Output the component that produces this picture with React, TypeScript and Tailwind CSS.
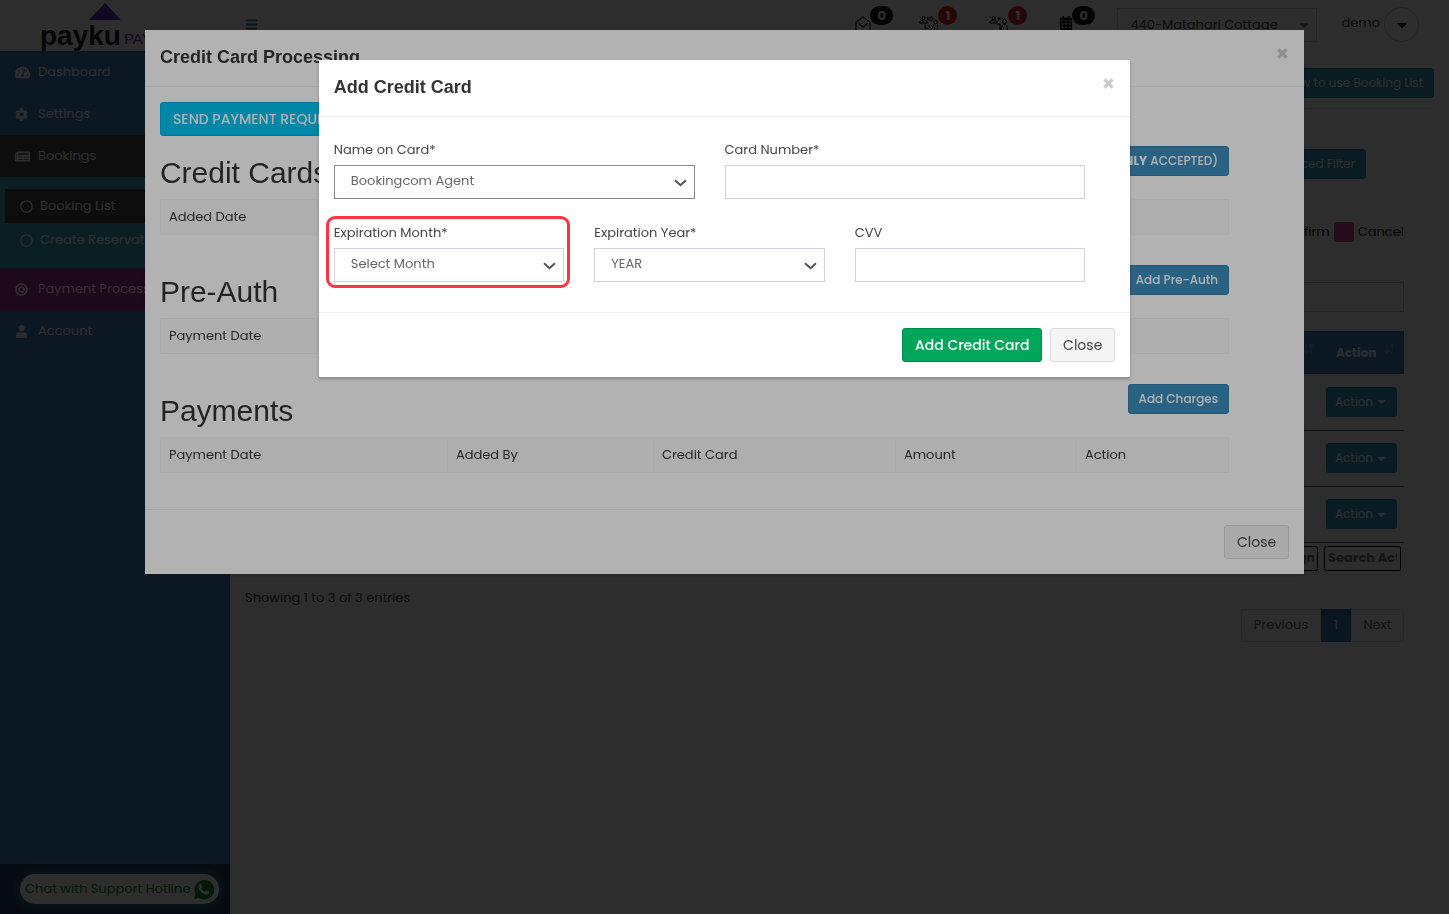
import { useState } from "react";
import type { ReactNode } from "react";
import {
  FaBars,
  FaBullseye,
  FaCalendarAlt,
  FaCaretDown,
  FaCog,
  FaNewspaper,
  FaRegCircle,
  FaTachometerAlt,
  FaUser,
} from "react-icons/fa";
import { ArrowDownUp } from "lucide-react";
import clsx from "clsx";

const MONTHS = ["January", "February", "March", "April", "May", "June", "July", "August", "September", "October", "November", "December"];
const YEARS = ["2024", "2025", "2026", "2027", "2028", "2029", "2030"];

function Logo() {
  return (
    <a href="#home" className="relative flex h-full w-[230px] shrink-0 items-end pl-10">
      <svg className="absolute left-[89px] top-[3px]" width="32" height="17" viewBox="0 0 32 17">
        <path d="M16 0L32 17H0z" fill="#6b2fc4" />
      </svg>
      <span className="font-['Liberation_Sans',sans-serif] text-[28px] leading-[31px] font-bold text-[#222]">payku</span>
      <span className="ml-[3px] font-['Liberation_Sans',sans-serif] text-[15px] leading-[24px] text-[#6b2fc4]">PAY</span>
    </a>
  );
}

function MailIcon() {
  return (
    <svg width="16" height="16" viewBox="0 0 16 16" fill="none" stroke="currentColor" strokeWidth="1.1">
      <path d="M1 6l7-5 7 5v9H1z" />
      <path d="M3.500 7.500L8 11l4.500-3.500" />
    </svg>
  );
}

function GuestIcon({ flip }: { flip?: boolean }) {
  return (
    <svg width="20" height="16" viewBox="0 0 20 16" fill="none" stroke="currentColor" strokeWidth="1">
      <circle cx="4.500" cy="2" r="1.500" />
      <path d="M.5 7c0-4 8-4 8 0z" />
      {flip ? (
        <>
          <path d="M14 2.500H9M10.500 1L9 2.500 10.500 4M8 8h3v7" />
          <circle cx="15.500" cy="5.500" r="2" />
          <path d="M12.500 13c0-6 6-6 6 0v2h-6z" />
        </>
      ) : (
        <>
          <path d="M8.500 1.800H12V.5l2.500 2.300L12 5V3.800H8.500zM6 8.500v4h4M9 9l2.500 3" />
          <circle cx="16.500" cy="6" r="1.800" />
          <path d="M18.500 8.500v6.500M15 8.500L11.500 14.500M15.500 15v-4" />
        </>
      )}
    </svg>
  );
}

type NavCountProps = { label: string; count: number; alert?: boolean; className?: string; children: ReactNode };

function NavCount({ label, count, alert, className, children }: NavCountProps) {
  return (
    <a href="#notifications" aria-label={label} className={clsx("flex items-start pt-[6px] text-black", className)}>
      <span className="mt-[10px]">{children}</span>
      <span
        className={clsx(
          "-ml-px flex h-[19px] items-center justify-center rounded-full px-[7px] text-[13px] font-bold text-white",
          alert ? "bg-[#dd2b20]" : "bg-[#161616]"
        )}
      >
        {count}
      </span>
    </a>
  );
}

function TopBar() {
  return (
    <header className="flex h-[51px] items-start bg-white">
      <Logo />
      <button type="button" aria-label="Toggle menu" className="mt-[18px] ml-[15px] text-[#2a7ab0]">
        <FaBars size={13} />
      </button>
      <nav className="ml-auto flex">
        <NavCount label="Messages" count={0} className="w-16"><MailIcon /></NavCount>
        <NavCount label="Check in" count={1} alert className="w-[70px]"><GuestIcon /></NavCount>
        <NavCount label="Check out" count={1} alert className="w-[70px]"><GuestIcon flip /></NavCount>
        <NavCount label="Calendar" count={0} className="w-[58px]"><FaCalendarAlt size={14} /></NavCount>
      </nav>
      <div className="relative mt-2">
        <select aria-label="Property" className="h-[34px] w-[200px] appearance-none border border-[#d2d6de] bg-white pl-3 text-[13px] text-[#444]">
          <option>440-Matahari Cottage</option>
        </select>
        <FaCaretDown size={14} className="absolute right-[6px] top-[10px] text-[#777]" />
      </div>
      <span className="mt-[13px] ml-6 text-[13px] leading-[20px] text-[#444]">demo</span>
      <button type="button" aria-label="User menu" className="mt-[7px] mr-[30px] ml-1 flex size-[35px] items-center justify-center rounded-full border border-[#ccc] text-black">
        <FaCaretDown size={16} />
      </button>
    </header>
  );
}

function NavLink({ icon, label, className }: { icon: ReactNode; label: string; className?: string }) {
  return (
    <a href="#nav" className={clsx("flex h-[42px] items-center pl-[15px] text-[13px] text-white", className)}>
      <span className="flex w-[23px] text-[13px]">{icon}</span>
      {label}
    </a>
  );
}

function Sidebar() {
  return (
    <aside className="flex w-[230px] shrink-0 flex-col bg-[#418bc8]">
      <NavLink icon={<FaTachometerAlt size={15} />} label="Dashboard" />
      <NavLink icon={<FaCog />} label="Settings" />
      <NavLink icon={<FaNewspaper size={15} />} label="Bookings" className="bg-[#4a4a4a]" />
      <div className="bg-[#3ba9c9] pt-3 pb-[11px] pl-[5px]">
        <a href="#bookings" className="flex h-[34px] items-center gap-[7px] bg-[#4a4a4a] pl-[15px] text-[13px] text-white">
          <FaRegCircle size={13} />Booking List
        </a>
        <a href="#create" className="flex h-[34px] items-center gap-[7px] pl-[15px] text-[13px] text-white">
          <FaRegCircle size={13} />Create Reservation
        </a>
      </div>
      <NavLink icon={<FaBullseye />} label="Payment Process" className="bg-[#a8309c]" />
      <NavLink icon={<FaUser size={13} />} label="Account" />
      <div className="mt-auto flex h-[50px] items-center bg-[#23395f] pl-5">
        <a href="#support" className="flex h-[30px] w-[199px] items-center justify-between rounded-full bg-white px-[5px] text-[13px] whitespace-nowrap text-[#128c2e] shadow-[0_0_14px_#3ba9c9]">
          Chat with Support Hotline
          <svg width="21" height="21" viewBox="0 0 21 21">
            <path d="M1 20l1.500-5.200A9.800 9.800 0 1 1 6.200 19z" fill="#128c2e" />
            <path d="M6.500 5.300c.7-.7 1.500-.6 1.900.2l.8 1.900c.2.500-.9 1.400-.9 1.700.8 1.700 2 2.900 3.700 3.600.3.100 1.200-1.300 1.700-1.100l1.900 1c.7.400.5 2-.7 2.700-3.600 2-10.800-4.500-9.300-8.700.2-.5.500-1 .9-1.300z" fill="#fff" />
          </svg>
        </a>
      </div>
    </aside>
  );
}

function BookingTable() {
  const sort = <ArrowDownUp size={13} className="text-[#6fb3dd]" />;
  return (
    <table className="mt-[19px] w-full table-fixed border-collapse text-[13px]">
      <thead>
        <tr className="h-[43px] bg-[#418bc8] text-white">
          <th scope="col"><span className="flex justify-end pr-[6px] pb-2">{sort}</span></th>
          <th scope="col" className="w-[83px] text-[12px]">
            <span className="flex items-center justify-between pr-2 pl-[15px]">
              Action<span className="pb-2">{sort}</span>
            </span>
          </th>
        </tr>
      </thead>
      <tbody>
        {[1, 2, 3].map((id) => (
          <tr key={id} className="h-14 border-b border-[#777]">
            <td />
            <td className="pr-[7px] text-right align-middle">
              <button type="button" className="inline-flex h-[30px] w-[71px] items-center justify-center gap-[2px] rounded-[3px] border border-[#2c86ab] bg-[#3498c4] text-[12px] text-white">
                Action<FaCaretDown size={13} />
              </button>
            </td>
          </tr>
        ))}
      </tbody>
      <tfoot>
        <tr className="h-8">
          <td className="pr-[3px] text-right">
            <input aria-label="Search Assign" placeholder="Search Assign" className="h-[25px] w-[102px] rounded-[2px] border border-black px-[3px] font-bold placeholder:text-[#777]" />
          </td>
          <td className="pr-[3px] text-right">
            <input aria-label="Search Action" placeholder="Search Action" className="h-[25px] w-[77px] rounded-[2px] border border-black px-[3px] font-bold placeholder:text-[#777]" />
          </td>
        </tr>
      </tfoot>
    </table>
  );
}

function BookingPage() {
  return (
    <main className="min-w-0 flex-1 bg-white px-[15px] pt-[17px] text-black">
      <div className="flex justify-end border-b border-[#eee] pb-[10px]">
        <a href="#help" className="flex h-[30px] items-center rounded-[3px] border border-[#2c86ab] bg-[#3498c4] px-[10px] text-[12px] text-white">
          How to use Booking List
        </a>
      </div>
      <div className="pr-[30px]">
        <div className="mt-10 flex justify-end pr-[38px]">
          <button type="button" className="h-[30px] rounded-[3px] border border-[#2c86ab] bg-[#3498c4] px-[10px] text-[12px] text-white">
            Advanced Filter
          </button>
        </div>
        <div className="mt-[43px] flex h-5 items-center justify-end gap-1 text-[13px]">
          <span>Confirm</span>
          <span className="size-5 rounded-[3px] bg-[#d04a98]" />
          <span>Cancel</span>
        </div>
        <div className="mt-10 flex justify-end">
          <input type="search" aria-label="Search bookings" className="h-[30px] w-[180px] border border-[#c4c4c4] bg-white" />
        </div>
        <BookingTable />
        <p className="mt-[14px] text-[13px] leading-5 text-[#444]">Showing 1 to 3 of 3 entries</p>
        <div className="mt-px flex justify-end text-[13px] text-[#666]">
          <button type="button" className="h-[33px] w-[80px] rounded-l-[4px] border border-[#ddd] pb-[2px]">Previous</button>
          <button type="button" aria-current="page" className="h-[33px] w-[30px] bg-[#337ab7] pb-[2px] text-white">1</button>
          <button type="button" className="h-[33px] w-[53px] rounded-r-[4px] border border-[#ddd] pb-[2px]">Next</button>
        </div>
      </div>
    </main>
  );
}

function ModalHeader({ title }: { title: string }) {
  return (
    <div className="flex items-start justify-between border-b border-[#f0f0f0] p-[15px]">
      <h4 className="mb-[2px] font-['Liberation_Sans',sans-serif] text-[18px] leading-[24px] font-bold text-[#333]">{title}</h4>
      <button type="button" aria-label="Dismiss" className="text-[21px] leading-[18px] font-bold text-[#ccc]">×</button>
    </div>
  );
}

function CloseButton() {
  return (
    <button type="button" className="h-[34px] w-[65px] rounded-[3px] border border-[#ddd] bg-[#f4f4f4] text-[14px] text-[#444]">
      Close
    </button>
  );
}

function PaymentSection({ title, action, columns }: { title: string; action: ReactNode; columns: string[] }) {
  return (
    <section className="mb-5 pt-[10px]">
      <div className="flex items-start justify-between">
        <h2 className="mt-[10px] mb-[10px] font-['Liberation_Sans',sans-serif] text-[30px] leading-[33px] text-[#333]">{title}</h2>
        <button type="button" className="h-[30px] rounded-[3px] border border-[#367fa9] bg-[#3c8dbc] px-[10px] text-[12px] font-medium text-white">
          {action}
        </button>
      </div>
      <table className="w-full table-fixed border-collapse border border-[#f0f0f0] bg-[#f9f9f9] text-left text-[13px] text-[#333]">
        <thead>
          <tr className="h-[35px]">
            {columns.map((name) => (
              <th
                key={name}
                scope="col"
                className="border border-[#f4f4f4] px-2 font-normal nth-1:w-[287px] nth-2:w-[206px] nth-3:w-[242px] nth-4:w-[181px]"
              >
                {name}
              </th>
            ))}
          </tr>
        </thead>
      </table>
    </section>
  );
}

function ProcessingModal() {
  return (
    <div className="fixed inset-0 flex items-start justify-center pt-[30px]">
      <div role="dialog" aria-label="Credit Card Processing" className="w-4/5 bg-white shadow-[0_2px_3px_rgba(0,0,0,0.125)]">
        <ModalHeader title="Credit Card Processing" />
        <div className="px-[15px] pt-[15px] pb-4">
          <button type="button" className="h-[34px] rounded-[3px] border border-[#00acd6] bg-[#00c0ef] px-3 text-[14px] font-medium text-white">
            SEND PAYMENT REQUEST
          </button>
          <div className="pr-[60px]">
            <PaymentSection
              title="Credit Cards"
              action={<>ADD CREDIT CARD (VISA / MASTERCARD <b>ONLY</b> ACCEPTED)</>}
              columns={["Added Date"]}
            />
            <PaymentSection title="Pre-Auth" action="Add Pre-Auth" columns={["Payment Date"]} />
            <PaymentSection
              title="Payments"
              action="Add Charges"
              columns={["Payment Date", "Added By", "Credit Card", "Amount", "Action"]}
            />
          </div>
        </div>
        <div className="flex justify-end border-t border-[#f0f0f0] p-[15px]">
          <CloseButton />
        </div>
      </div>
    </div>
  );
}

type SelectFieldProps = {
  id: string;
  label: string;
  options: string[];
  active?: boolean;
  highlighted?: boolean;
};

function SelectField({ id, label, options, active, highlighted }: SelectFieldProps) {
  const [value, setValue] = useState(options[0]);

  return (
    <div className="relative">
      <label htmlFor={id} className="mb-[5px] block text-[13px] leading-5 text-[#444]">{label}</label>
      <div className="relative">
        <select
          id={id}
          value={value}
          onChange={(e) => setValue(e.target.value)}
          className={clsx(
            "block h-[34px] w-full appearance-none border bg-white pb-[3px] pl-4 text-[13px] text-[#666]",
            active ? "border-[#888]" : "border-[#d2d2de]"
          )}
        >
          {options.map((o) => <option key={o}>{o}</option>)}
        </select>
        <svg className="pointer-events-none absolute right-2 top-[14px]" width="13" height="8" viewBox="0 0 13 8" fill="none">
          <path d="M1 1.200l5.500 5 5.500-5" stroke="#555" strokeWidth="2" />
        </svg>
      </div>
      {highlighted && (
        <div className="pointer-events-none absolute -top-[7px] -right-[6px] -bottom-[6px] -left-2 rounded-[9px] border-3 border-[#f93545]" />
      )}
    </div>
  );
}

function TextField({ id, label }: { id: string; label: string }) {
  return (
    <div>
      <label htmlFor={id} className="mb-[5px] block text-[13px] leading-5 text-[#444]">{label}</label>
      <input id={id} type="text" className="block h-[34px] w-full border border-[#d2d2de] bg-white px-3 text-[13px] text-[#666]" />
    </div>
  );
}

function AddCardModal() {
  return (
    <div className="fixed inset-0 flex items-start justify-center bg-black/30 pt-[60px]">
      <form
        role="dialog"
        aria-label="Add Credit Card"
        onSubmit={(e) => e.preventDefault()}
        className="w-[56%] bg-white shadow-[0_2px_3px_rgba(0,0,0,0.25)]"
      >
        <ModalHeader title="Add Credit Card" />
        <div className="flex flex-col gap-6 pt-[23px] pr-[45px] pb-[30px] pl-[15px]">
          <div className="grid grid-cols-2 gap-[30px]">
            <SelectField id="card-name" label="Name on Card*" options={["Bookingcom Agent"]} active />
            <TextField id="card-number" label="Card Number*" />
          </div>
          <div className="grid grid-cols-3 gap-[30px]">
            <SelectField id="exp-month" label="Expiration Month*" options={["Select Month", ...MONTHS]} highlighted />
            <SelectField id="exp-year" label="Expiration Year*" options={["YEAR", ...YEARS]} />
            <TextField id="cvv" label="CVV" />
          </div>
        </div>
        <div className="flex justify-end gap-2 border-t border-[#f0f0f0] p-[15px]">
          <button type="submit" className="h-[34px] w-[140px] rounded-[3px] border border-[#008d4c] bg-[#00a65a] text-[14px] font-medium text-white">
            Add Credit Card
          </button>
          <CloseButton />
        </div>
      </form>
    </div>
  );
}

export default function App() {
  return (
    <div className="flex min-h-screen flex-col font-[Poppins,Inter,sans-serif]">
      <TopBar />
      <div className="flex flex-1">
        <Sidebar />
        <BookingPage />
      </div>
      <div className="fixed inset-0 bg-black/75" />
      <ProcessingModal />
      <AddCardModal />
    </div>
  );
}
